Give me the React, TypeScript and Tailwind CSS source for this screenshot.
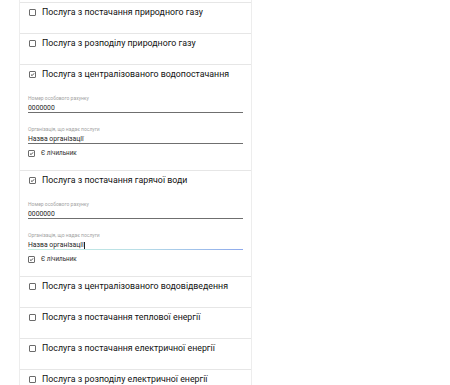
import React from "react";

type Service = {
  title: string;
  checked?: boolean;
  lastFocused?: boolean;
};

const services: Service[] = [
  { title: "Послуга з постачання природного газу" },
  { title: "Послуга з розподілу природного газу" },
  { title: "Послуга з централізованого водопостачання", checked: true },
  { title: "Послуга з постачання гарячої води", checked: true, lastFocused: true },
  { title: "Послуга з централізованого водовідведення" },
  { title: "Послуга з постачання теплової енергії" },
  { title: "Послуга з постачання електричної енергії" },
  { title: "Послуга з розподілу електричної енергії" },
];

const Box = ({ checked }: { checked?: boolean }) => (
  <span className="w-[7px] h-[7px] shrink-0 border border-[#6b6b6b] rounded-[1px] bg-white flex items-center justify-center">
    {checked && (
      <svg viewBox="0 0 10 10" className="w-full h-full">
        <path d="M2 5.2 L4.2 7.3 L8 2.8" fill="none" stroke="#222" strokeWidth="1.6" />
      </svg>
    )}
  </span>
);

const Field = ({ label, value, focused }: { label: string; value: string; focused?: boolean }) => (
  <div>
    <div className="text-[5px] leading-[6px] text-[#a3a3a3] whitespace-nowrap">{label}</div>
    <div className="mt-[1px] pt-[2px] text-[6.8px] leading-[8px] text-[#1f1f1f]">
      {value}
      {focused && <span className="inline-block w-[0.6px] h-[7px] bg-[#222] align-middle ml-[0.5px]" />}
    </div>
    {focused ? (
      <div className="h-[1px] bg-gradient-to-r from-[#c6eee0] via-[#b9dfe6] to-[#8ea9ec]" />
    ) : (
      <div className="h-[1px] bg-[#6f6f6f]" />
    )}
  </div>
);

export default function App() {
  return (
    <div className="min-h-screen bg-white font-['Roboto',sans-serif]">
      <div className="ml-[19px] w-[233px] border-x border-[#ededed] flex flex-col">
        <div className="h-[3px] border-b border-[#e6e6e6]" />
        {services.map((s) => (
          <div key={s.title} className={`border-b border-[#e6e6e6] px-[8px] ${s.checked ? "" : "h-[31px]"}`}>
            <div className="flex items-center gap-[6px] pl-[1px] pt-[3px]">
              <div className="flex items-center gap-[6px] h-[12px]">
                <Box checked={s.checked} />
                <span className="text-[8.8px] leading-[12px] text-[#111] whitespace-nowrap">{s.title}</span>
              </div>
            </div>
            {s.checked && (
              <div className="mt-[15px] pb-[13px]">
                <Field label="Номер особового рахунку" value="0000000" />
                <div className="mt-[13px]">
                  <Field label="Організація, що надає послуги" value="Назва організації" focused={s.lastFocused} />
                </div>
                <div className="mt-[5px] flex items-center gap-[6px] h-[8px]">
                  <Box checked />
                  <span className="text-[6.3px] leading-[8px] text-[#1f1f1f]">Є лічильник</span>
                </div>
              </div>
            )}
          </div>
        ))}
      </div>
    </div>
  );
}
